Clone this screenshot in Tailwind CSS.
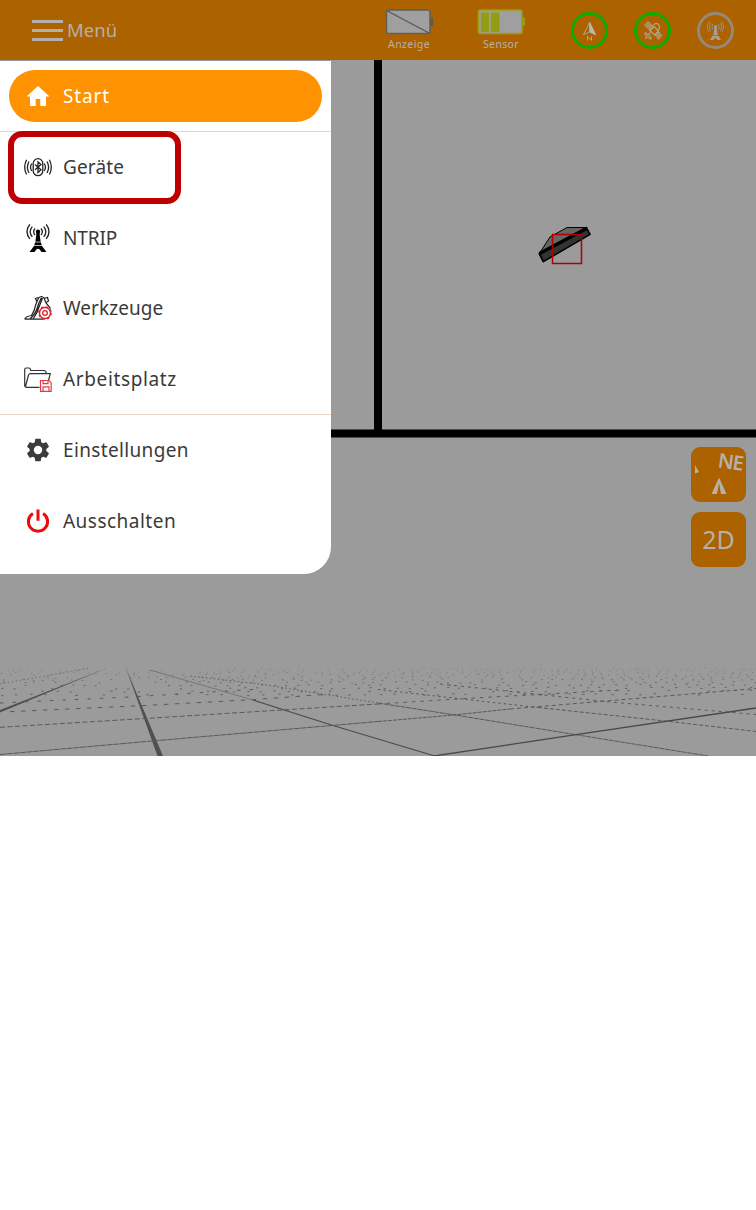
<!DOCTYPE html>
<html lang="de">
<head>
<meta charset="utf-8">
<title>Menü</title>
<script src="https://cdn.jsdelivr.net/npm/@tailwindcss/browser@4"></script>
</head>
<body class="bg-white font-['Noto_Sans',sans-serif]">
<main class="relative h-[756px] w-[756px] overflow-hidden bg-[#9b9b9b]">
  <svg class="absolute inset-0" width="756" height="756" viewBox="0 0 756 756">
    <path d="M378 60V434M330 433.500H756" stroke="#000" stroke-width="8" fill="none"/>
    <path d="M539 254L550 237 567 227.500H586L590 234 543 262Z" fill="#666" stroke="#000" stroke-width="1"/>
    <path d="M539.500 253.500L586.500 227.500 590 234.500 543.500 261.500Z" fill="#333" stroke="#000" stroke-width="1.500"/>
    <path d="M539.500 253.500L586.500 228.500" stroke="#000" stroke-width="3.500"/>
    <rect x="552.500" y="234.500" width="29" height="29" fill="none" stroke="#b00000" stroke-width="1.500"/>
    <g id="dots" fill="#555"></g>
    <g fill="#505050">
      <path d="M107 668L0 710V712.500Z"/>
      <path d="M125.500 667L157.500 756H163Z"/>
    </g>
    <g fill="none" stroke="#5a5a5a">
      <path d="M150 670L253 700" stroke="#777"/>
      <path d="M253 700L333 725.500 378 739 435 756" stroke="#4c4c4c" stroke-width="1.200"/>
      <path d="M0 754.500L152 741 378 721.500" stroke-dasharray="6 .7"/>
      <path d="M378 721.500L454 715 510 709" stroke-dasharray="4 1"/>
      <path d="M510 709L600 701.500 756 688.500" stroke-dasharray="4 3"/>
      <path d="M0 727.300L145 718.500 378 704" stroke-dasharray="5 2.500"/>
      <path d="M378 704L465 698.500 620 690" stroke-dasharray="3.500 5"/>
      <path d="M190 676L260 684 378 703" stroke-dasharray="1.500 2.500"/>
      <path d="M378 703L455 715 576 734.700 708 756" stroke-dasharray="5 .7"/>
      <path d="M378 689.500L538 707.500" stroke-dasharray="2.500 3"/>
      <path d="M538 707.500L665 721 756 731.500" stroke-dasharray="4 2"/>
      <path d="M440 684L610 702 756 714.500" stroke-dasharray="3 4"/>
      <path d="M434 756L576 734.700 756 708" stroke="#484848" stroke-width="1.300"/>
      <path d="M10 711.700L145 705.500 255 699.500 330 694" stroke-dasharray="4.500 6.500"/>
      <path d="M0 703L130 697 260 689" stroke-dasharray="3.500 9"/>
      <path d="M0 684L90 668" stroke-dasharray="1.500 2.500" stroke="#707070"/>
    </g>
  </svg>

  <header class="relative flex h-[60px] items-center bg-[#ad6200] text-[#b5afa9]">
    <div class="flex w-[385px] items-center pl-8">
      <div class="flex w-[31px] flex-col gap-[6px]">
        <i class="h-[3px] bg-[#b5afa9]"></i><i class="h-[3px] bg-[#b5afa9]"></i><i class="h-[3px] bg-[#b5afa9]"></i>
      </div>
      <span class="pl-[4px] text-[18.500px] leading-none">Menü</span>
    </div>
    <div class="flex w-[48px] flex-col items-center pb-[2px]">
      <svg width="48" height="28" viewBox="0 0 48 28"><rect x="1.500" y="2" width="43.500" height="23.500" rx="2" fill="#9f9f9f" stroke="#625f59" stroke-width="1.500"/><path d="M2.500 3L44 25" stroke="#555" stroke-width="1.200"/><path d="M45.500 9.500H49V18H45.500Z" fill="#5d5a54"/></svg>
      <span class="mt-[2px] text-[10.500px] leading-[13px] tracking-[.400px]">Anzeige</span>
    </div>
    <div class="ml-[44px] flex w-[48px] flex-col items-center pb-[2px]">
      <svg width="48" height="28" viewBox="0 0 48 28"><rect x="1.500" y="2" width="43.500" height="23.500" rx="2" fill="#9f9f9f" stroke="#98a018" stroke-width="1.700"/><path d="M3.800 4.500H12V24H3.800ZM13.800 4.500H22.500V24H13.800ZM45.500 9.500H49V18H45.500Z" fill="#929d12"/></svg>
      <span class="mt-[2px] text-[10.500px] leading-[13px] tracking-[.350px]">Sensor</span>
    </div>
    <div class="ml-[45.500px] flex gap-[26px]">
      <svg width="37" height="37" viewBox="0 0 37 37"><circle cx="18.500" cy="18.500" r="17" fill="none" stroke="#0eac00" stroke-width="3"/><path d="M18.500 10.500L12.500 22.800 18.500 20Z" fill="none" stroke="#aaa39a" stroke-width="1"/><path d="M18.700 9.500L25.500 23.500 18.700 20.500Z" fill="#bab8b5"/><path d="M16.500 28.500V24.500L20.500 28.300V24.500" fill="none" stroke="#b0a89e"/></svg>
      <svg width="37" height="37" viewBox="0 0 37 37"><circle cx="18.500" cy="18.500" r="17" fill="none" stroke="#0eac00" stroke-width="3"/><g fill="none" stroke="#b9a387"><path d="M10.500 13L14 9.500 19.500 14.500 16 18.500ZM20.500 22.500L24 19 28 23.500 24.500 27.500Z" fill="#b08d60" stroke-dasharray="1.500 .6"/><path d="M16 18.500L20 14.500 24.500 19 20.500 23ZM19.500 13.500Q21 10 24.500 12.500 27 16 23.500 18" stroke-width="1.200"/><path d="M11 20.500L17.500 27.500M16.500 20L11 27M10 22H16V27.500M12 20V26H18" stroke-dasharray="2 .5"/></g></svg>
      <svg width="37" height="37" viewBox="0 0 37 37"><circle cx="18.500" cy="18.500" r="17" fill="none" stroke="#96897b" stroke-width="3"/><g fill="none" stroke="#9c9082" stroke-width="1"><path d="M15.800 12Q13.800 14.800 15.800 17.500M13.600 11Q10.800 15 13.600 18.800M12.300 9.500Q8.500 15 12.300 20M21.200 12Q23.200 14.800 21.200 17.500M23.400 11Q26.200 15 23.400 18.800M24.700 9.500Q28.500 15 24.700 20"/></g><circle cx="18.500" cy="14.500" r="1.500" fill="#a79d92"/><path d="M17.500 15H19.500L20.500 22 24 28H20.500Q18.500 24 16.500 28H13L16.500 22Z" fill="#a79d92"/><path d="M15 23.500H22" stroke="#ad6200" stroke-width=".7"/></svg>
    </div>
  </header>

  <aside class="relative mt-px flex h-[513px] w-[331px] flex-col rounded-br-[27px] bg-white text-[19px] text-[#3a3a3a]">
    <div class="h-[71px] border-b border-[#e6d5c9] pt-[9px] pl-[9px]">
      <div class="flex h-[52px] w-[312.500px] items-center rounded-full bg-[#ff9200] pl-[15px] text-white">
        <svg width="28" height="28" viewBox="0 0 28 28"><path d="M14 4L25.500 14.500H22V24H16.300V17H11.700V24H6V14.500H2.500Z" fill="#fff"/></svg>
        <span class="pl-[11px] tracking-[.850px]">Start</span>
      </div>
    </div>
    <nav class="flex h-[282px] flex-col">
      <a class="flex h-[70.500px] items-center gap-[11px] pl-6">
        <svg width="28" height="28" viewBox="0 0 28 28" fill="none" stroke="#222" stroke-width="1.300"><rect x="9.200" y="5.700" width="9.600" height="17" rx="4.800"/><path d="M11 11.500L17 16.800 14 19.500V9L17 11.500 11 16.800"/><path d="M7.800 10.500Q5.200 14.200 7.800 18M5 8.500Q1.800 14.200 5 20M2.600 6.700Q-1.200 14.200 2.600 21.500M20.200 10.500Q22.800 14.200 20.200 18M23 8.500Q26.200 14.200 23 20M25.400 6.700Q29.200 14.200 25.400 21.500"/></svg>
        <span class="tracking-[.150px]">Geräte</span></a>
      <a class="flex h-[70.500px] items-center gap-[11px] pl-6">
        <svg width="28" height="28" viewBox="0 0 28 28"><g fill="none" stroke="#222" stroke-width="1.300"><path d="M11 4.500Q8.300 7.700 11 11M8.300 2.600Q4 7.700 8.300 12.800M5.800.3Q.2 7.700 5.800 14.800M17 4.500Q19.700 7.700 17 11M19.700 2.600Q24 7.700 19.700 12.800M22.200.3Q27.800 7.700 22.200 14.800"/></g><circle cx="14" cy="7.700" r="2.200"/><path d="M12.500 9H15.500L16.500 17 18 22 22.500 28H17.500Q14 21.500 10.500 28H5.500L10 22 11.500 17Z"/><path d="M10 18H18M9 21.500H19" stroke="#fff" stroke-width=".7"/></svg>
        <span class="tracking-[-.100px]">NTRIP</span></a>
      <a class="flex h-[70.500px] items-center gap-[11px] pl-6">
        <svg width="28" height="28" viewBox="0 0 28 28" fill="none"><g stroke="#222" stroke-width="1.200"><path d="M.7 25.200Q1.500 22.500 7.500 21.500 10.500 17 12 10L14.500 4Q17.500 1 20 4L22 9 26.500 14.500M.7 25.200H19M6 25Q12.500 19 14.500 10L17.500 3.500M9 25Q13.500 19 16 10.500L18.500 4M13 8L11.500 4.500 14 3.500M20 4.500L23.500 3.500 24.500 7 22 8.500"/></g><g stroke="#dc1f2e"><circle cx="21" cy="19" r="5.500" stroke-width="1.400"/><circle cx="21" cy="19" r="6.300" stroke-width="1.200" stroke-dasharray="2.470 2.470"/><circle cx="21" cy="19" r="2.300" stroke-width="1.300"/></g></svg>
        <span class="tracking-[.050px]">Werkzeuge</span></a>
      <a class="flex h-[70.500px] items-center gap-[11px] pl-6">
        <svg width="28" height="28" viewBox="0 0 28 28" fill="none"><path d="M.7 21V4.500Q.7 3 2 3H5Q6.500 3 6.700 5.500H20Q22.200 5.500 22.200 8.500M.7 21Q1 22.500 2.500 22.300H15.500M1.500 21.500L4.500 10Q5 8.600 6.500 8.600H26.300L24.500 15.500" stroke="#333" stroke-width="1.200"/><path d="M16.500 15.500H25L27.200 17.700V26.300H16.500ZM19 15.700V18.700H24V15.700M19 26V21.800H25V26" stroke="#df3d45" stroke-width="1.200"/></svg>
        <span class="tracking-[.630px]">Arbeitsplatz</span></a>
    </nav>
    <div class="flex flex-col border-t border-[#e6d5c9]">
      <a class="flex h-[70.500px] items-center gap-[11px] pl-6">
        <svg width="28" height="28" viewBox="0 0 24 24"><path fill="#3c3c3c" d="M19.140 12.940c.04-.3.060-.61.060-.94s-.02-.64-.07-.94l2.030-1.580c.18-.14.230-.41.120-.61l-1.920-3.320c-.12-.22-.37-.29-.59-.22l-2.390.96c-.5-.38-1.030-.7-1.620-.94L14.400 2.810A.49.49 0 0 0 13.920 2.400H10.080c-.24 0-.43.170-.47.410L9.250 5.350C8.660 5.590 8.120 5.920 7.630 6.290L5.240 5.330c-.22-.08-.47 0-.59.220L2.740 8.870c-.12.210-.08.470.12.610l2.030 1.580c-.05.300-.09.630-.09.940s.02.640.070.940l-2.030 1.580c-.18.140-.23.410-.12.610l1.920 3.320c.12.220.370.290.590.220l2.390-.96c.5.380 1.030.700 1.620.940l.36 2.540c.05.240.240.410.480.410h3.840c.24 0 .44-.17.470-.41l.36-2.540c.59-.24 1.130-.56 1.620-.94l2.390.96c.22.080.470 0 .59-.22l1.920-3.320c.12-.22.070-.47-.12-.61zM12 15.600a3.600 3.600 0 1 1 0-7.200 3.600 3.600 0 0 1 0 7.200z"/></svg>
        <span class="tracking-[.350px]">Einstellungen</span></a>
      <a class="flex h-[70.500px] items-center gap-[11px] pl-6">
        <svg width="28" height="28" viewBox="0 0 28 28" fill="none" stroke="#e90c0c" stroke-width="3"><path d="M14 2.500V13.800M8.900 6.500A9.600 9.600 0 1 0 19.100 6.500"/></svg>
        <span class="tracking-[.480px]">Ausschalten</span></a>
    </div>
  </aside>

  <div class="absolute top-[447px] right-[10px] flex flex-col gap-[10px] text-[#b5b0aa]">
    <button class="relative block h-[55px] w-[55px] rounded-[9px] bg-[#ad6200]">
      <span class="absolute top-[3px] left-[27px] rotate-[8deg] text-[20px] leading-[24px] font-semibold tracking-[-1px]">NE</span>
      <svg class="absolute inset-0" width="55" height="55" viewBox="0 0 55 55"><path d="M28 30.500L35.500 47H30L28 36 26 47H20.500Z" fill="#b5b0aa"/><path d="M4 18L8 25 4 26.500Z" fill="#b5b0aa"/></svg>
    </button>
    <button class="flex h-[55px] w-[55px] items-center justify-center rounded-[9px] bg-[#ad6200] pb-px text-[25px] leading-none">2D</button>
  </div>

  <div class="absolute top-[131px] left-[8px] h-[73px] w-[173px] rounded-[14px] border-6 border-[#c00000]"></div>
</main>
<script>
  // Distant grid points: density and contrast fade toward the horizon.
  let seed = 17, out = '';
  const rnd = () => (seed = (seed * 16807) % 2147483647) / 2147483647;
  for (let row = 0, y = 668; y < 697; row++, y += 1.7 + row * 0.16) {
    const step = 5.5 + row * 0.9;
    for (let x = 0; x < 756; x += step) {
      if (rnd() < (x < 200 ? 0.6 : 0.3)) continue;
      const w = 1 + row * 0.15;
      out += `<rect x="${(x + rnd() * 3).toFixed(1)}" y="${(y + rnd() * 1.4 - x * 0.001).toFixed(1)}" width="${w.toFixed(1)}" height="1" opacity="${(0.2 + Math.min(row, 8) * 0.06 + rnd() * 0.15).toFixed(2)}"/>`;
    }
  }
  document.getElementById('dots').innerHTML = out;
</script>
</body>
</html>
